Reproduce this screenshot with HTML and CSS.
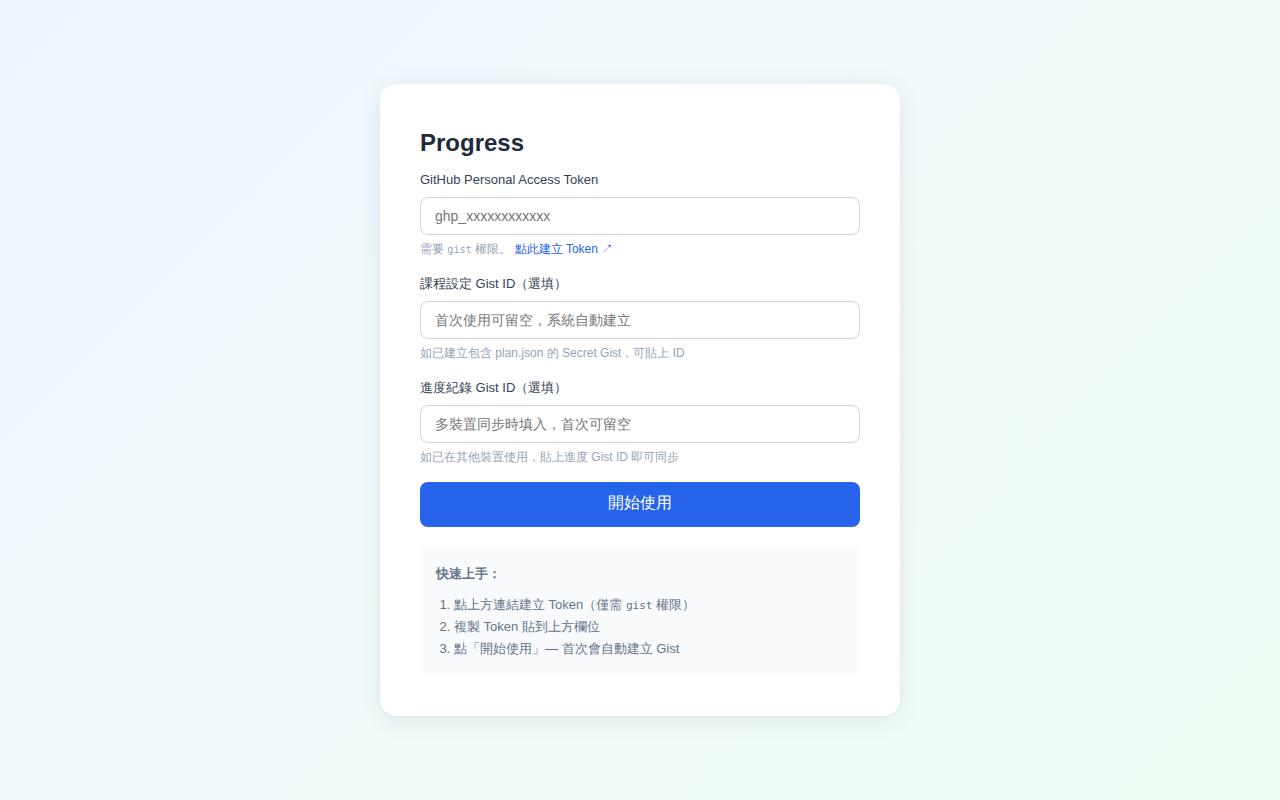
FILE: index.html
```html
<!DOCTYPE html>
<html lang="zh-Hant">
<head>
<meta charset="utf-8">
<title>Progress</title>
<link rel="stylesheet" href="styles.css">
</head>
<body>
<div class="page">
  <div class="card">
    <h1 class="title">Progress</h1>

    <div class="field">
      <label class="label">GitHub Personal Access Token</label>
      <input class="input" type="password" placeholder="ghp_xxxxxxxxxxxx">
      <p class="hint">需要 <code class="mono">gist</code> 權限。 <a class="link" href="#">點此建立 Token ↗</a></p>
    </div>

    <div class="field">
      <label class="label">課程設定 Gist ID（選填）</label>
      <input class="input" type="text" placeholder="首次使用可留空，系統自動建立">
      <p class="hint">如已建立包含 plan.json 的 Secret Gist，可貼上 ID</p>
    </div>

    <div class="field">
      <label class="label">進度紀錄 Gist ID（選填）</label>
      <input class="input" type="text" placeholder="多裝置同步時填入，首次可留空">
      <p class="hint">如已在其他裝置使用，貼上進度 Gist ID 即可同步</p>
    </div>

    <button class="btn">開始使用</button>

    <div class="guide">
      <div class="guide-title">快速上手：</div>
      <ol class="guide-list">
        <li>點上方連結建立 Token（僅需 <code class="mono">gist</code> 權限）</li>
        <li>複製 Token 貼到上方欄位</li>
        <li>點「開始使用」— 首次會自動建立 Gist</li>
      </ol>
    </div>
  </div>
</div>
</body>
</html>
```

FILE: styles.css
```css
* { box-sizing: border-box; }

html, body {
  margin: 0;
  padding: 0;
}

body {
  font-family: "Liberation Sans", sans-serif;
  background: linear-gradient(135deg, #eff6ff 0%, #f0fdf4 100%);
  min-height: 100vh;
}

.page {
  min-height: 100vh;
  display: flex;
  align-items: center;
  justify-content: center;
}

.card {
  width: 520px;
  background: #ffffff;
  border-radius: 16px;
  padding: 40px;
  box-shadow: 0 4px 24px rgba(15, 23, 42, 0.08), 0 1px 3px rgba(15, 23, 42, 0.04);
}

.title {
  margin: 1px 0 9px;
  font-size: 24px;
  line-height: 36px;
  font-weight: 700;
  color: #1e293b;
}

.field {
  margin-bottom: 17px;
}

.label {
  display: block;
  font-size: 13px;
  line-height: 20px;
  color: #334155;
  margin-bottom: 7px;
}

.input {
  display: block;
  width: 100%;
  height: 38px;
  padding: 0 14px;
  border: 1px solid #cbd5e1;
  border-radius: 8px;
  font-family: "Liberation Sans", sans-serif;
  font-size: 14px;
  color: #1e293b;
  background: #ffffff;
  outline: none;
}

.input::placeholder {
  color: #757575;
}

.hint {
  margin: 6px 0 0;
  font-size: 12px;
  line-height: 16px;
  color: #94a3b8;
}

.mono {
  font-family: "DejaVu Sans Mono", monospace;
  font-size: 0.85em;
  line-height: 1;
}

.link {
  color: #2563eb;
  text-decoration: none;
}

.btn {
  display: block;
  width: 100%;
  height: 45px;
  padding: 0 0 3px;
  border: none;
  border-radius: 8px;
  background: #2563eb;
  color: #ffffff;
  font-family: "Liberation Sans", sans-serif;
  font-size: 16px;
  line-height: 20px;
  cursor: pointer;
}

.guide {
  margin-top: 20px;
  background: #f8fafc;
  border-radius: 8px;
  padding: 16px;
}

.guide-title {
  font-size: 13px;
  line-height: 22px;
  font-weight: 700;
  color: #64748b;
  margin-bottom: 9px;
}

.guide-list {
  margin: 0;
  padding-left: 18px;
  font-size: 13px;
  line-height: 22px;
  color: #64748b;
}
```
